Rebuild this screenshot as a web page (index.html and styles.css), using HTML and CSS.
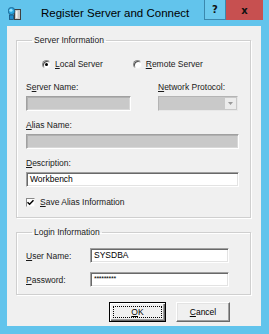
FILE: index.html
```html
<!DOCTYPE html>
<html>
<head>
<meta charset="utf-8">
<link rel="stylesheet" href="styles.css">
</head>
<body>
<div class="window">
  <div class="titlebar">
    <svg class="app-icon" width="13" height="13" viewBox="0 0 13 13">
      <rect x="6.5" y="2.5" width="6" height="10" fill="#c8c8c8" stroke="#404040"/>
      <rect x="8" y="4" width="1.5" height="7" fill="#f4f4f4"/>
      <ellipse cx="3.5" cy="4" rx="3.3" ry="3.6" fill="#2aa7e0" stroke="#1a5e8a" stroke-width="0.8"/>
      <ellipse cx="3" cy="3.2" rx="1.6" ry="1.5" fill="#8fe0ff"/>
      <rect x="1.5" y="8" width="4" height="4.5" fill="#1f8ccc" stroke="#17507a" stroke-width="0.8"/>
    </svg>
    <span class="title">Register Server and Connect</span>
    <div class="caption-buttons">
      <div class="cap-btn cap-help">?</div>
      <div class="cap-btn cap-close">x</div>
    </div>
  </div>
  <div class="client">
    <fieldset class="group group-server">
      <legend class="group-title">Server Information</legend>
      <div class="radio-row">
        <div class="radio-item">
          <span class="radio"><span class="radio-dot"></span></span>
          <span class="label"><u>L</u>ocal Server</span>
        </div>
        <div class="radio-item">
          <span class="radio"></span>
          <span class="label"><u>R</u>emote Server</span>
        </div>
      </div>
      <div class="server-grid">
        <span class="label">S<u>e</u>rver Name:</span>
        <span class="label"><u>N</u>etwork Protocol:</span>
        <div class="field field-disabled"></div>
        <div class="combo">
          <div class="combo-arrow">
            <svg width="5" height="3" viewBox="0 0 5 3"><path d="M0 0h5L2.5 3z" fill="#9a9a9a"/></svg>
          </div>
        </div>
      </div>
      <div class="stack">
        <span class="label"><u>A</u>lias Name:</span>
        <div class="field field-disabled"></div>
      </div>
      <div class="stack">
        <span class="label"><u>D</u>escription:</span>
        <div class="field">Workbench</div>
      </div>
      <div class="check-row">
        <span class="checkbox">
          <svg width="7" height="7" viewBox="0 0 7 7"><path d="M0.5 3.2L2.6 5.3L6.5 1.2" fill="none" stroke="#000" stroke-width="1.5"/></svg>
        </span>
        <span class="label"><u>S</u>ave Alias Information</span>
      </div>
    </fieldset>
    <fieldset class="group group-login">
      <legend class="group-title">Login Information</legend>
      <div class="login-grid">
        <span class="label"><u>U</u>ser Name:</span>
        <div class="field">SYSDBA</div>
        <span class="label"><u>P</u>assword:</span>
        <div class="field field-password">*********</div>
      </div>
    </fieldset>
    <div class="actions">
      <button class="btn btn-default"><u>O</u>K</button>
      <button class="btn"><u>C</u>ancel</button>
    </div>
  </div>
</div>
</body>
</html>
```
FILE: styles.css
```css
* { box-sizing: border-box; }
html, body { margin: 0; padding: 0; }
body {
  width: 269px;
  height: 334px;
  background: #62c4ec;
  font-family: "Liberation Sans", Arial, sans-serif;
  overflow: hidden;
}
.window {
  width: 269px;
  height: 334px;
  display: flex;
  flex-direction: column;
  background: #62c4ec;
}
.titlebar {
  height: 26px;
  display: flex;
  align-items: flex-start;
  padding: 0 6px 0 8px;
}
.app-icon { margin-top: 7px; flex: none; }
.title {
  margin-left: 20px;
  font-size: 11.5px;
  line-height: 26px;
  color: #000;
  white-space: nowrap;
}
.caption-buttons {
  margin-left: auto;
  display: flex;
  height: 20px;
}
.cap-btn {
  height: 20px;
  display: flex;
  align-items: center;
  justify-content: center;
  font-family: "DejaVu Sans", sans-serif;
  font-weight: bold;
  font-size: 10px;
  color: #111;
}
.cap-help {
  width: 22px;
  background: #6ccaee;
  border: 1px solid #3b88ad;
  border-top: none;
}
.cap-close {
  width: 37px;
  background: #c75050;
  font-size: 10px;
}
.client {
  flex: 1;
  margin: 0 8px 8px 7px;
  background: #f0f0f0;
  padding: 9px 10px 0 9px;
  display: flex;
  flex-direction: column;
}
.label {
  font-size: 8.5px;
  line-height: 10px;
  color: #1a1a1a;
  white-space: nowrap;
}
.label u { text-underline-offset: 1px; }
.group {
  margin: 0;
  padding: 0;
  min-width: 0;
  border: 1px solid #cfcfcf;
  box-shadow: 1px 1px 0 #fff, inset 1px 1px 0 #fff;
}
.group-title {
  font-size: 8.5px;
  line-height: 10px;
  color: #1a1a1a;
  padding: 0 2px;
  margin-left: 6px;
}
.group-server {
  padding: 14px 11px 10px 9px;
  display: flex;
  flex-direction: column;
}
.radio-row {
  display: flex;
  gap: 30px;
  padding-left: 16px;
  height: 10px;
  align-items: center;
}
.radio-item {
  display: flex;
  align-items: center;
  gap: 4px;
}
.radio {
  width: 9px;
  height: 9px;
  border-radius: 50%;
  background: #fff;
  border: 1px solid;
  border-color: #8a8a8a #f4f4f4 #f4f4f4 #8a8a8a;
  box-shadow: inset 1px 1px 0 #505050;
  display: grid;
  place-items: center;
  flex: none;
}
.radio-dot {
  width: 3px;
  height: 3px;
  border-radius: 50%;
  background: #000;
}
.server-grid {
  margin-top: 13px;
  display: grid;
  grid-template-columns: 105px 80px;
  column-gap: 27px;
  row-gap: 4px;
}
.stack {
  margin-top: 9px;
  display: flex;
  flex-direction: column;
  gap: 4px;
}
.field {
  height: 15px;
  background: #fff;
  border: 1px solid;
  border-color: #a0a0a0 #ffffff #ffffff #a0a0a0;
  box-shadow: inset 1px 1px 0 #696969, inset -1px -1px 0 #e3e3e3;
  font-size: 8.5px;
  line-height: 13px;
  padding: 0 3px;
  color: #000;
  white-space: nowrap;
}
.field-disabled {
  background: #c9c9c9;
  box-shadow: inset 1px 1px 0 #b0b0b0, inset -1px -1px 0 #d8d8d8;
}
.combo {
  height: 15px;
  background: #c9c9c9;
  border: 1px solid;
  border-color: #b4b4b4 #e8e8e8 #e8e8e8 #b4b4b4;
  display: flex;
  justify-content: flex-end;
  padding: 1px;
}
.combo-arrow {
  width: 11px;
  background: #ececec;
  display: grid;
  place-items: center;
}
.check-row {
  margin-top: 10px;
  display: flex;
  align-items: center;
  gap: 5px;
  height: 10px;
}
.checkbox {
  width: 9px;
  height: 9px;
  background: #fff;
  border: 1px solid;
  border-color: #8a8a8a #f4f4f4 #f4f4f4 #8a8a8a;
  display: grid;
  place-items: center;
  flex: none;
}
.group-login {
  margin-top: 9px;
  padding: 11px 11px 7px 9px;
}
.login-grid {
  display: grid;
  grid-template-columns: 64px 139px;
  row-gap: 9px;
  align-items: center;
}
.field-password {
  font-size: 7px;
  line-height: 12px;
  letter-spacing: -0.3px;
}
.actions {
  margin-top: 7px;
  display: flex;
  justify-content: flex-end;
  gap: 10px;
  padding-right: 21px;
}
.btn {
  width: 54px;
  height: 20px;
  padding: 0;
  margin: 0;
  font-family: "Liberation Sans", Arial, sans-serif;
  font-size: 8.5px;
  color: #000;
  background: #f0f0f0;
  border: 1px solid;
  border-color: #ffffff #696969 #696969 #ffffff;
  box-shadow: inset -1px -1px 0 #a0a0a0, inset 1px 1px 0 #e3e3e3;
}
.btn-default {
  width: 57px;
  border: 1px solid #000;
  box-shadow: inset 1px 1px 0 #fff, inset -1px -1px 0 #696969, inset -2px -2px 0 #a0a0a0;
  outline: 1px dotted #000;
  outline-offset: -5px;
}
```
